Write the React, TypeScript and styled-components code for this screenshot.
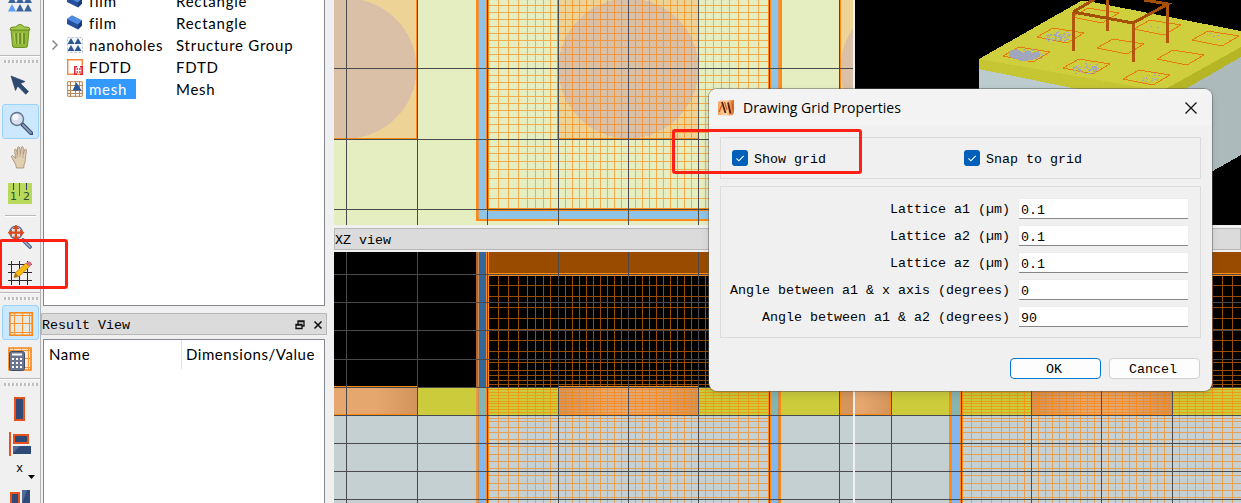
import React from "react";
import styled, { createGlobalStyle } from "styled-components";

const GlobalStyle = createGlobalStyle`
  * { box-sizing: border-box; }
  body { margin: 0; background: #f0f0f0; }
  svg { display: block; }
`;

const mono = `"Liberation Mono", "Noto Sans CJK SC", monospace`;
const ui = `Lato, "Noto Sans", sans-serif`;

const Window = styled.div`
  position: relative;
  display: flex;
  width: 1241px;
  height: 503px;
  overflow: hidden;
  background: #f0f0f0;
  color: #000;
`;

const Toolbar = styled.nav`
  flex: none;
  width: 41px;
  height: 503px;
  overflow: hidden;
  border-right: 1px solid #b4b4b4;
`;

const Slot = styled.div<{ $h: number; $top?: number }>`
  height: ${(p) => p.$h}px;
  padding: ${(p) => p.$top ?? 0}px 0 0 8px;
`;

const ActiveTool = styled.div`
  width: 37px;
  height: 35px;
  margin-left: 2px;
  padding: 6px 0 0 6px;
  border: 1px solid #99d1ff;
  border-radius: 3px;
  background: #cce8ff;
`;

const Rule = styled.div<{ $inset?: boolean }>`
  height: 2px;
  margin: ${(p) => (p.$inset ? "0 4px 0 5px" : "0")};
  background: linear-gradient(#b8b8b8 50%, #fff 50%);
`;

const Grip = styled.div`
  height: 3px;
  margin: 3px 2px 1px 4px;
  background: repeating-linear-gradient(90deg, #bdbdbd 0 2px, #fafafa 2px 3px, transparent 3px 4px);
`;

const AxisLabel = styled.div`
  height: 12px;
  padding-left: 16px;
  font: 12px/13px ${mono};
`;

const Side = styled.section`
  flex: none;
  display: flex;
  flex-direction: column;
  width: 286px;
  height: 503px;
`;

const Tree = styled.div`
  flex: none;
  width: 282px;
  height: 306px;
  margin-left: 2px;
  overflow: hidden;
  border: 1px solid #828790;
  border-top: 0;
  background: #fff;
`;

const TreeRows = styled.div`
  margin-top: -10px;
`;

const TreeRow = styled.div`
  display: grid;
  grid-template-columns: 23px 19px 90px 1fr;
  align-items: center;
  height: 22px;
  font: 15px/20px ${ui};
  letter-spacing: 0.75px;
`;

const NodeName = styled.span<{ $selected?: boolean }>`
  justify-self: start;
  height: 20px;
  padding: 0 9px 0 3px;
  white-space: nowrap;
  background: ${(p) => (p.$selected ? "#3399ff" : "transparent")};
  color: ${(p) => (p.$selected ? "#fff" : "#000")};
`;

const NodeType = styled.span`
  white-space: nowrap;
`;

const PanelTitle = styled.header<{ $gap?: number }>`
  flex: none;
  display: flex;
  align-items: center;
  justify-content: space-between;
  height: 22px;
  margin-top: ${(p) => p.$gap ?? 0}px;
  padding: 2px 3px 0 1px;
  border: 1px solid #b8b8b8;
  background: #dbdbdb;
  font: 13.33px/16px ${mono};
`;

const PanelText = styled.span`
  padding-top: 2px;
  margin-left: -1px;
`;

const PanelButtons = styled.div`
  display: flex;
  gap: 8px;
`;

const Table = styled.div`
  flex: 1;
  width: 282px;
  margin: 4px 0 0 2px;
  border: 1px solid #828790;
  border-bottom: 0;
  background: #fff;
`;

const TableHead = styled.div`
  display: grid;
  grid-template-columns: 137px 1fr;
  height: 29px;
  font: 15px/28px ${ui};
  letter-spacing: 0.55px;
`;

const HeadCell = styled.div`
  padding-left: 5px;
  white-space: nowrap;
  & + & { border-left: 1px solid #e2e2e2; padding-left: 4px; }
`;

const Views = styled.main`
  display: grid;
  grid-template-columns: 519px 386px;
  grid-template-rows: 225px 22px 251px;
  column-gap: 2px;
  margin-left: 7px;
`;

const ViewTitle = styled(PanelTitle)`
  margin-top: 3px;
`;

const ViewBody = styled.div`
  margin-top: 5px;
  height: 251px;
`;

const Dialog = styled.div`
  position: absolute;
  left: 709px;
  top: 89px;
  width: 503px;
  height: 302px;
  border-radius: 8px;
  background: #f0f0f0;
  box-shadow: 0 0 0 1px rgba(90, 90, 90, 0.5), 0 3px 8px rgba(0, 0, 0, 0.12);
  overflow: hidden;
`;

const DialogBar = styled.div`
  display: flex;
  align-items: center;
  height: 37px;
  padding: 0 14px 0 9px;
  background: #f3f3f3;
  font: 14px/20px "Open Sans", "Noto Sans", sans-serif;
`;

const DialogTitle = styled.span`
  flex: 1;
  margin-left: 7px;
  letter-spacing: 0.03px;
`;

const CheckGroup = styled.div`
  display: grid;
  grid-template-columns: 232px 1fr;
  align-items: center;
  height: 42px;
  margin: 11px 11px 0;
  padding-left: 11px;
  border: 1px solid #dcdcdc;
`;

const CheckLabel = styled.label`
  display: flex;
  align-items: center;
  gap: 6px;
  font: 13.33px/18px ${mono};
`;

const CheckText = styled.span`
  padding-top: 3px;
`;

const Box = styled.span`
  width: 16px;
  height: 16px;
  border-radius: 3px;
  background: #005fb8;
`;

const FieldGroup = styled.div`
  display: flex;
  flex-direction: column;
  gap: 6px;
  height: 152px;
  margin: 7px 11px 0;
  padding: 11px 11px 0 0;
  border: 1px solid #dcdcdc;
`;

const Field = styled.label`
  display: flex;
  align-items: center;
  justify-content: flex-end;
  gap: 8px;
  height: 21px;
  font: 13.33px/17px ${mono};
  white-space: pre;
`;

const FieldText = styled.span`
  padding-top: 2px;
`;

const Value = styled.input`
  width: 171px;
  height: 21px;
  padding: 3px 2px 0;
  border: 1px solid #ececec;
  border-bottom: 1px solid #868686;
  border-radius: 2px;
  outline: 0;
  background: #fff;
  font: 13.33px/16px ${mono};
`;

const Actions = styled.div`
  display: flex;
  justify-content: flex-end;
  gap: 8px;
  margin: 20px 12px 0;
`;

const Action = styled.button<{ $primary?: boolean }>`
  width: 91px;
  height: 21px;
  padding: 3px 3px 0 0;
  border: 1px solid ${(p) => (p.$primary ? "#0078d4" : "#d0d0d0")};
  border-radius: 4px;
  background: #fdfdfd;
  color: #000;
  font: 13.33px/16px ${mono};
`;

const Mark = styled.div<{ $x: number; $y: number; $w: number; $h: number }>`
  position: absolute;
  left: ${(p) => p.$x}px;
  top: ${(p) => p.$y}px;
  width: ${(p) => p.$w}px;
  height: ${(p) => p.$h}px;
  border: 3px solid #ff2015;
  border-radius: 3px;
`;

/* ---------- icons ---------- */

const Icon = ({ children, w = 24, h = 24 }: { children: React.ReactNode; w?: number; h?: number }) => (
  <svg width={w} height={h} viewBox={`0 0 ${w} ${h}`}>{children}</svg>
);

const Triangles = () => (
  <Icon h={12}>
    {[0, 8, 16].map((x) => (
      <g key={x}>
        <path d={`M${x + 4} -4l4 7h-8z`} fill="#3c629c" />
        <path d={`M${x + 4} 4l4 7.500h-8z`} fill={x ? "#3c629c" : "#5c9cf5"} />
      </g>
    ))}
  </Icon>
);

const Trash = () => (
  <Icon>
    <path d="M3 6h18l-1.500 16q-.3 1.500-2 1.500h-11q-1.700 0-2-1.500z" fill="#93b93a" stroke="#6c9122" />
    <path d="M2 6q0-3 3-3h3q1-2.500 4-2.500T16 3h3q3 0 3 3z" fill="#a5c94c" stroke="#6c9122" />
    <path d="M8 9v11M12 9v11M16 9v11" stroke="#65891f" strokeWidth="1.600" />
    <path d="M6.500 9l.8 11M10.300 9v11M14.300 9v11" stroke="#b9d969" />
  </Icon>
);

const Cursor = () => (
  <Icon>
    <path d="M3 3l14 5.500-4.500 2 8 8-2.800 2.800-8-8.300-2.200 4.500z" fill="#2f4a72" stroke="#213655" strokeWidth=".6" />
  </Icon>
);

const Lens = () => (
  <Icon>
    <path d="M13 13l9.500 9.500" stroke="#3b4d6e" strokeWidth="4" strokeLinecap="round" />
    <path d="M14 14l8 8" stroke="#8b9dba" strokeWidth="1.800" strokeLinecap="round" />
    <circle cx="8" cy="8" r="6.500" fill="#d9dfee" stroke="#63718c" strokeWidth="1.400" />
    <circle cx="6.500" cy="6" r="3" fill="#fff" opacity=".8" />
  </Icon>
);

const Hand = () => (
  <Icon>
    <path
      d="M8.500 23l-1-4-3.700-6.500q-.8-2 .8-2l3 3-1-8.500q.3-1.800 1.800-.3l1.200 5V2.500q1-1.500 2 0l.8 6.500 1-7q1.200-1.200 1.900.4l-.2 7.100 1.700-5q1.400-.9 1.600.8l-1 8.200q0 4-1.300 6l-.4 3.500z"
      fill="#e3cfb2"
      stroke="#a8917c"
      strokeWidth=".9"
    />
    <path d="M9 9v4M12 9v3M15 10v3" stroke="#a8917c" strokeWidth=".7" />
  </Icon>
);

const RulerBox = styled.div`
  display: flex;
  justify-content: space-between;
  align-items: flex-end;
  width: 24px;
  height: 21px;
  padding: 0 2px 1px;
  background: linear-gradient(90deg, #31425a, #31425a) 5px 0 / 1px 7px no-repeat,
    linear-gradient(90deg, #55713a, #55713a) 11px 0 / 1px 13px no-repeat,
    linear-gradient(90deg, #31425a, #31425a) 18px 0 / 1px 7px no-repeat, #b8d95b;
  color: #31522c;
  font: 11px/12px "DejaVu Sans", sans-serif;
`;

const Extents = () => (
  <Icon>
    <path d="M15 15l7 7" stroke="#4c6285" strokeWidth="3.800" strokeLinecap="round" />
    <path d="M15 15l7 7" stroke="#a2b5cf" strokeWidth="1.500" strokeLinecap="round" />
    <circle cx="8" cy="7.500" r="6.300" fill="#dde4ef" stroke="#5e7192" strokeWidth="1.300" />
    <path d="M7.900 2v12M2 7.700h12" stroke="#d64a1c" strokeWidth="2.200" />
    <path d="M7.900 -.5l3.500 4.500H4.400zM7.900 16l3.500-4.500H4.400zM-.5 7.700L4 4.200v7zM16.500 7.700L12 4.200v7z" fill="#dc4d1b" />
  </Icon>
);

const GridPencil = () => (
  <Icon>
    <path d="M0 3.500h24M0 11.500h24M0 19.500h24M3.500 0v24M11.500 0v24M19.500 0v24" stroke="#30252d" />
    <path d="M6 16.500l1.500-5L18 2l3.500 3.500L11 15.500z" fill="#f9b90f" stroke="#b97a10" strokeWidth=".7" />
    <path d="M6 16.500l1.300-4.500 3.200 3.200z" fill="#9c7431" />
    <path d="M18 2.200q2-2.500 4-1.500 2.500 1.300 1.500 3.300l-2 1.500z" fill="#d76b88" />
  </Icon>
);

const OrangeGrid = () => (
  <Icon>
    <path d="M.8.800h22.400v22.400H.8z" fill="#e6e8e4" stroke="#fb8415" strokeWidth="1.600" />
    <path d="M5.500 0v24M13.500 0v24M20.500 0v24M0 3.500h24M0 11.500h24M0 20.500h24" stroke="#fb9230" />
  </Icon>
);

const GridCalc = () => (
  <Icon>
    <path d="M1 1h22v22H1z" fill="#fbe9d5" stroke="#fb8415" strokeWidth="1.600" />
    <path d="M5.500 0v24M13.500 0v24M20.500 0v24M0 3.500h24M0 11.500h24M0 20.500h24" stroke="#fb9230" />
    <rect x="1.500" y="4.500" width="15" height="19" rx="2" fill="#6b7590" stroke="#414b65" />
    <path d="M4 7.500h10" stroke="#fff" strokeWidth="2" />
    <path d="M4 12h10M4 16h10M4 20h10" stroke="#fff" strokeWidth="2" strokeDasharray="2 2" />
  </Icon>
);

const BlockIcon = () => (
  <Icon>
    <rect x="7" y="1" width="9" height="22" fill="#304a78" stroke="#e8511c" strokeWidth="2" />
  </Icon>
);

const AlignIcon = () => (
  <Icon>
    <path d="M2 0v24" stroke="#e8511c" strokeWidth="2" />
    <rect x="6" y="3" width="14" height="8" fill="#304a78" stroke="#e8511c" strokeWidth="2" />
    <rect x="5" y="14" width="18" height="8" fill="#304a78" />
    <path d="M5 14h7l-7 7z" fill="#6980aa" opacity=".6" />
  </Icon>
);

const SpreadIcon = () => (
  <Icon>
    <rect x="3" y="3" width="8" height="24" fill="#304a78" stroke="#e8511c" strokeWidth="2" />
    <rect x="14" y="0" width="8" height="24" fill="#304a78" />
    <path d="M14 0h5l-5 14z" fill="#6980aa" opacity=".6" />
  </Icon>
);

const Slab = () => (
  <Icon w={16} h={16}>
    <path d="M0 4l5-3.500 10 5v5l-4 4L0 9z" fill="#264f9b" />
    <path d="M0 4l5-3.500 10 5-4 4z" fill="#4f8ae4" />
    <path d="M11 9.500l4-4v5l-4 4z" fill="#1c3a78" />
  </Icon>
);

const Group = () => (
  <Icon w={16} h={16}>
    <path d="M.5.5h15v15H.5z" fill="#f3f5f9" stroke="#b8c0cc" strokeDasharray="2 2" />
    {[[4, 1], [11, 1], [4, 8], [11, 8]].map(([x, y]) => (
      <path key={`${x}${y}`} d={`M${x} ${y}l3.500 6h-7z`} fill="#2c5596" />
    ))}
  </Icon>
);

const Region = () => (
  <Icon w={16} h={16}>
    <path d="M.7.700h14.600v14.600H.7z" fill="#fff" stroke="#f8863a" strokeWidth="1.400" />
    <path d="M10 7.800H7.800v7.400H10M13 7.800h2.200v7.400H13" fill="none" stroke="#e21f32" strokeWidth="1.500" />
    <path d="M9.500 10h5M9.500 13h5" stroke="#e21f32" strokeWidth="1.600" strokeDasharray="1.600 1" />
  </Icon>
);

const MeshIcon = () => (
  <Icon w={16} h={16}>
    <path d="M.7.700h14.600v14.600H.7zM3.500 0v16M8.500 0v16M12.500 0v16M0 4.500h16M0 9.500h16M0 12.500h16" fill="#fff" stroke="#b98354" />
    <path d="M9.500 1.500l5 8h-9z" fill="#24569c" />
  </Icon>
);

/* ---------- simulation views ---------- */

const INK = "#4a4a4d";
const EDGE = "#ff8a14";
const range = (a: number, b: number, s: number) => {
  const out: number[] = [];
  for (let v = a; v <= b; v += s) out.push(v);
  return out;
};
const vLines = (xs: number[], y0: number, y1: number) => xs.map((x) => `M${x + 0.5} ${y0}V${y1}`).join("");
const hLines = (ys: number[], x0: number, x1: number) => ys.map((y) => `M${x0} ${y + 0.5}H${x1}`).join("");

const meshX = [488, 498, 508, 518, 527, 535, 543, 550, ...range(565, 691, 7), 705, 713, 721, 729, 738, 748, 758];
const meshXRight = [971, 981, 991, 1001, 1009, 1017, 1024, ...range(1038, 1165, 7), 1179, 1187, 1195, 1203, 1212, 1222, 1232];
const meshY = [...range(5, 124, 7), 132, 146, 153, 161, 169, 178, 188, 198];
const meshZ = [
  285, 296, 307, 318, 329, 340, 351, 362, 370, 375, 380, 384, 389, 392, 395, 398, 401, 403, 406, 409, 412,
  418, 421, 427, 432, 439, 446, 454, 461, 468, 475, 483, 490, 497,
];

const TopView = () => (
  <svg width="519" height="225" viewBox="334 0 519 225" shapeRendering="crispEdges">
    <rect x="334" width="519" height="225" fill="#e4eec1" />
    <path d="M334 0h83v138h-83zM558 0h140v138H558zM840 0h13v138h-13z" fill="#edd395" />
    <circle cx="346.500" cy="68.500" r="70" fill="#d9c0a7" />
    <circle cx="628.500" cy="68.500" r="70" fill="#d9c0a7" />
    <circle cx="910.500" cy="68.500" r="70" fill="#d9c0a7" />
    <path d="M479 0h7v211h285V0h7v219H479z" fill="#8fc4e6" />
    <path d="M478 0h1v219h-1zM778 0h2v219h-2z" fill="#d99a5c" />
    <path d={vLines(meshX, 0, 208) + hLines(meshY, 488, 769)} stroke="#ff7f00" opacity=".6" />
    <path d="M334 138.500h83M416.500 138V0M557.500 0v138.500h141V0M840.500 0v138M487.500 208.500h283M487.500 210.500h283" fill="none" stroke={EDGE} />
    <path d="M477 0v219M780.500 0v219M476 220h305" stroke={EDGE} strokeWidth="2" />
    <path d="M486.500 0v210M488.500 0v210M768.500 0v210M770.500 0v210" stroke={EDGE} />
    <path d={vLines([346, 417, 487, 558, 628, 698, 769, 839], 0, 225) + hLines([68, 139, 209], 334, 853)} stroke={INK} />
  </svg>
);

const SideLeft = () => (
  <svg width="519" height="251" viewBox="334 252 519 251" shapeRendering="crispEdges">
    <defs>
      <linearGradient id="rodEnd"><stop offset=".5" stopColor="#e6a76e" /><stop offset="1" stopColor="#d2945b" /></linearGradient>
      <linearGradient id="rod">
        <stop offset="0" stopColor="#d2945b" /><stop offset=".35" stopColor="#e6a76e" />
        <stop offset=".65" stopColor="#e6a76e" /><stop offset="1" stopColor="#d2945b" />
      </linearGradient>
    </defs>
    <rect x="334" y="252" width="519" height="135" />
    <rect x="334" y="387" width="519" height="28" fill="#cbcb3c" />
    <rect x="334" y="415" width="519" height="88" fill="#c5d0d2" />
    <rect x="334" y="387" width="83" height="28" fill="url(#rodEnd)" />
    <rect x="558" y="387" width="140" height="28" fill="url(#rod)" />
    <rect x="840" y="387" width="13" height="28" fill="#d4965c" />
    <path d="M488 252h281v21H488z" fill="#994c00" />
    <path d="M479 252h7v135h-7zM771 252h7v135h-7z" fill="#33669a" />
    <path d="M479 387h7v28h-7zM771 387h7v28h-7z" fill="#84b5b0" />
    <path d="M479 415h7v88h-7zM771 415h7v88h-7z" fill="#84b7ee" />
    <path d="M478 252h1v251h-1zM778 252h2v251h-2z" fill="#c88b55" />
    <path d="M476 252h2v135h-2z" fill="#b0662c" />
    <path d="M476 387h2v116h-2z" fill="#ee9846" />
    <path d={vLines(meshX, 275, 503) + hLines(meshZ, 488, 769)} stroke="#ff7f00" opacity=".6" />
    <path d="M334 386.500h83M334 414.500h83v-28M558 386.500h140M558 414.500h140M840.500 387v27.500h13M488 273.500h281M488 275.500h281" fill="none" stroke={EDGE} />
    <path d={vLines([486, 488, 768, 770, 780], 252, 503)} stroke={EDGE} />
    <path d={vLines([346, 417, 487, 558, 628, 698, 769, 839], 252, 503) + hLines([274, 302, 330, 359, 387, 415, 443, 471, 499], 334, 853)} stroke={INK} />
  </svg>
);

const SideRight = () => (
  <svg width="386" height="251" viewBox="855 252 386 251" shapeRendering="crispEdges">
    <defs>
      <linearGradient id="rod2">
        <stop offset="0" stopColor="#d2945b" /><stop offset=".35" stopColor="#e6a76e" />
        <stop offset=".65" stopColor="#e6a76e" /><stop offset="1" stopColor="#d2945b" />
      </linearGradient>
      <linearGradient id="rodEnd2"><stop offset=".2" stopColor="#e6a76e" /><stop offset="1" stopColor="#d2945b" /></linearGradient>
    </defs>
    <rect x="855" y="252" width="386" height="135" />
    <rect x="855" y="387" width="386" height="28" fill="#cbcb3c" />
    <rect x="855" y="415" width="386" height="88" fill="#c5d0d2" />
    <rect x="855" y="387" width="36" height="28" fill="url(#rodEnd2)" />
    <rect x="1032" y="387" width="140" height="28" fill="url(#rod2)" />
    <path d="M962 252h279v21H962z" fill="#994c00" />
    <path d="M952 387h8v28h-8z" fill="#84b5b0" />
    <path d="M952 415h8v88h-8z" fill="#84b7ee" />
    <path d="M949 387h3v116h-3z" fill={EDGE} />
    <path d={vLines(meshXRight, 275, 503) + hLines(meshZ, 962, 1241)} stroke="#ff7f00" opacity=".6" />
    <path d="M855 414.500h35.500V387M1032 414.500h140M962 273.500h279M962 275.500h279" fill="none" stroke={EDGE} />
    <path d={vLines([960, 962], 252, 503)} stroke={EDGE} />
    <path d={vLines([891, 961, 1031, 1101, 1172], 252, 503) + hLines([274, 302, 330, 359, 387, 415, 443, 471, 499], 855, 1241)} stroke={INK} />
  </svg>
);

/* speckled remains of hole walls seen through the film surface */
const speckles = (cx: number, cy: number, n: number, spread: number, seed: number) => {
  let s = seed;
  const rnd = () => ((s = (s * 16807) % 2147483647) / 2147483647);
  let d = "";
  for (let i = 0; i < n; i++) {
    const x = Math.round(cx + (rnd() - 0.5) * spread);
    const y = Math.round(cy + (rnd() + rnd() - 1) * 6);
    const w = rnd() > 0.5 ? 2 : 1;
    d += `M${x} ${y}h${w}v1h-${w}z`;
  }
  return d;
};

const holes: [number, number][] = [
  [1026, 54], [1086, 66], [1146, 77], [1060, 35], [1120, 46], [1180, 57], [1095, 15], [1157, 27], [1215, 38],
];

const PerspectiveView = () => (
  <svg width="386" height="225" viewBox="855 0 386 225" shapeRendering="crispEdges">
    <rect x="855" width="386" height="225" />
    <path d="M979 62l184 32v107l-184-30z" fill="#bccbcd" />
    <path d="M1160 98l81-48v105l-81 46z" fill="#adbabb" />
    <path d="M979 59l20-4 162 30v21L979 69z" fill="#c6c534" />
    <path d="M1161 86l80-44v15l-80 46z" fill="#b6b526" />
    <path d="M979 59L1081 1h6l154 30v16l-79 44z" fill="#cfcf3e" />
    <g fill="none" stroke="#e87812">
      {holes.map(([x, y]) => (
        <path key={`${x}-${y}`} d={`M${x - 23} ${y + 2}L${x - 7} ${y - 7}L${x + 24} ${y - 2}L${x + 7} ${y + 8}Z`} />
      ))}
    </g>
    <path d="M1009 51l8-2 6 4 5-3 3 3 8-2 1 4-3 4-8 1-8 1-12-4z" fill="#a2a6bd" />
    <path
      d={speckles(1029, 54, 45, 28, 1100011) + speckles(1058, 36, 75, 24, 2300023) + speckles(1085, 68, 75, 25, 3700037) + speckles(1149, 78, 18, 18, 5300053) + speckles(1156, 27, 3, 22, 7100071) + speckles(1215, 37, 7, 30, 8300083)}
      fill="#a2a6bd"
    />
    <path d="M1107.500 0v31M1073.500 12v39M1133.500 23v39M1167.500 4v39" stroke="#b2560e" strokeWidth="3" />
    <path d="M1073 12l60 11 35-19-24-4M1073 12l22-13" fill="none" stroke="#a44e06" strokeWidth="3" />
  </svg>
);

/* ---------- page ---------- */

const nodes = [
  { name: "film", type: "Rectangle", icon: <Slab /> },
  { name: "film", type: "Rectangle", icon: <Slab /> },
  { name: "nanoholes", type: "Structure Group", icon: <Group />, expandable: true },
  { name: "FDTD", type: "FDTD", icon: <Region /> },
  { name: "mesh", type: "Mesh", icon: <MeshIcon />, selected: true },
];

const fields = [
  ["Lattice a1 (µm)", "0.1"],
  ["Lattice a2 (µm)", "0.1"],
  ["Lattice az (µm)", "0.1"],
  ["Angle between a1 & x axis (degrees)", "0"],
  ["Angle between a1 & a2 (degrees)", "90"],
];

const Check = ({ label }: { label: string }) => (
  <CheckLabel>
    <Box>
      <Icon w={16} h={16}>
        <path d="M4.500 8.500l2.400 2.300 4.800-5" fill="none" stroke="#fff" strokeWidth="1.100" />
      </Icon>
    </Box>
    <CheckText>{label}</CheckText>
  </CheckLabel>
);

export default function App() {
  return (
    <>
      <GlobalStyle />
      <Window>
        <Toolbar>
          <Slot $h={12}><Triangles /></Slot>
          <Slot $h={43} $top={12}><Trash /></Slot>
          <Rule />
          <Grip />
          <Slot $h={40} $top={9}><Cursor /></Slot>
          <ActiveTool><Lens /></ActiveTool>
          <Slot $h={44} $top={6}><Hand /></Slot>
          <Slot $h={32}>
            <RulerBox><span>1</span><span>2</span></RulerBox>
          </Slot>
          <Rule $inset />
          <Slot $h={36} $top={8}><Extents /></Slot>
          <Slot $h={39} $top={8}><GridPencil /></Slot>
          <Rule />
          <Grip />
          <Slot $h={4} />
          <ActiveTool><OrangeGrid /></ActiveTool>
          <Slot $h={38} $top={7}><GridCalc /></Slot>
          <Rule />
          <Grip />
          <Slot $h={35} $top={10}><BlockIcon /></Slot>
          <Slot $h={41} $top={10}><AlignIcon /></Slot>
          <AxisLabel>x</AxisLabel>
          <Slot $h={13}>
            <Icon w={28} h={5}><path d="M20 0h7l-3.500 4z" /></Icon>
          </Slot>
          <Slot $h={24} $top={2}><SpreadIcon /></Slot>
        </Toolbar>

        <Side>
          <Tree>
            <TreeRows>
              {nodes.map((n, i) => (
                <TreeRow key={i}>
                  <span>
                    {n.expandable && (
                      <Icon w={16} h={12}><path d="M8.500 1.500L13 6l-4.500 4.500" fill="none" stroke="#8a8a8a" strokeWidth="1.500" /></Icon>
                    )}
                  </span>
                  {n.icon}
                  <NodeName $selected={n.selected}>{n.name}</NodeName>
                  <NodeType>{n.type}</NodeType>
                </TreeRow>
              ))}
            </TreeRows>
          </Tree>
          <PanelTitle $gap={7}>
            <PanelText>Result View</PanelText>
            <PanelButtons>
              <Icon w={10} h={10}>
                <path d="M3 4V1h6v5H7M1 4.500h6v4H1zM1 5h6M3 1.500h6" fill="none" stroke="#111" strokeWidth="1.300" />
              </Icon>
              <Icon w={10} h={10}><path d="M1.500 1.500l7 7M8.500 1.500l-7 7" stroke="#111" strokeWidth="1.600" /></Icon>
            </PanelButtons>
          </PanelTitle>
          <Table>
            <TableHead>
              <HeadCell>Name</HeadCell>
              <HeadCell>Dimensions/Value</HeadCell>
            </TableHead>
          </Table>
        </Side>

        <Views>
          <TopView />
          <PerspectiveView />
          <ViewTitle><PanelText>XZ view</PanelText></ViewTitle>
          <ViewTitle />
          <ViewBody><SideLeft /></ViewBody>
          <ViewBody><SideRight /></ViewBody>
        </Views>

        <Dialog>
          <DialogBar>
            <Icon w={18} h={16}>
              <defs>
                <linearGradient id="flame" x2="1">
                  <stop offset="0" stopColor="#f6a45e" /><stop offset=".5" stopColor="#ffd9ae" /><stop offset="1" stopColor="#e66a1d" />
                </linearGradient>
              </defs>
              <path d="M0 2.500Q1 0 5 .5l11-.5v12q-.5 3.500-4 3.500H8l-8-.5z" fill="url(#flame)" />
              <path d="M4 2l3.500 11M10 2.500l2.500 11" stroke="#5a2410" strokeWidth="1.900" />
              <path d="M1 12l3-7M6.500 2l2.500 8M14 2l1 8" stroke="#d45a16" strokeWidth="1.300" />
            </Icon>
            <DialogTitle>Drawing Grid Properties</DialogTitle>
            <Icon w={14} h={14}><path d="M1.500 1.500l11 11M12.500 1.500l-11 11" stroke="#111" strokeWidth="1.300" /></Icon>
          </DialogBar>
          <CheckGroup>
            <Check label="Show grid" />
            <Check label="Snap to grid" />
          </CheckGroup>
          <FieldGroup>
            {fields.map(([label, value]) => (
              <Field key={label}>
                <FieldText>{label}</FieldText>
                <Value readOnly value={value} />
              </Field>
            ))}
          </FieldGroup>
          <Actions>
            <Action $primary>OK</Action>
            <Action>Cancel</Action>
          </Actions>
        </Dialog>

        <Mark $x={672} $y={129} $w={190} $h={45} />
        <Mark $x={-1} $y={239} $w={69} $h={50} />
      </Window>
    </>
  );
}
